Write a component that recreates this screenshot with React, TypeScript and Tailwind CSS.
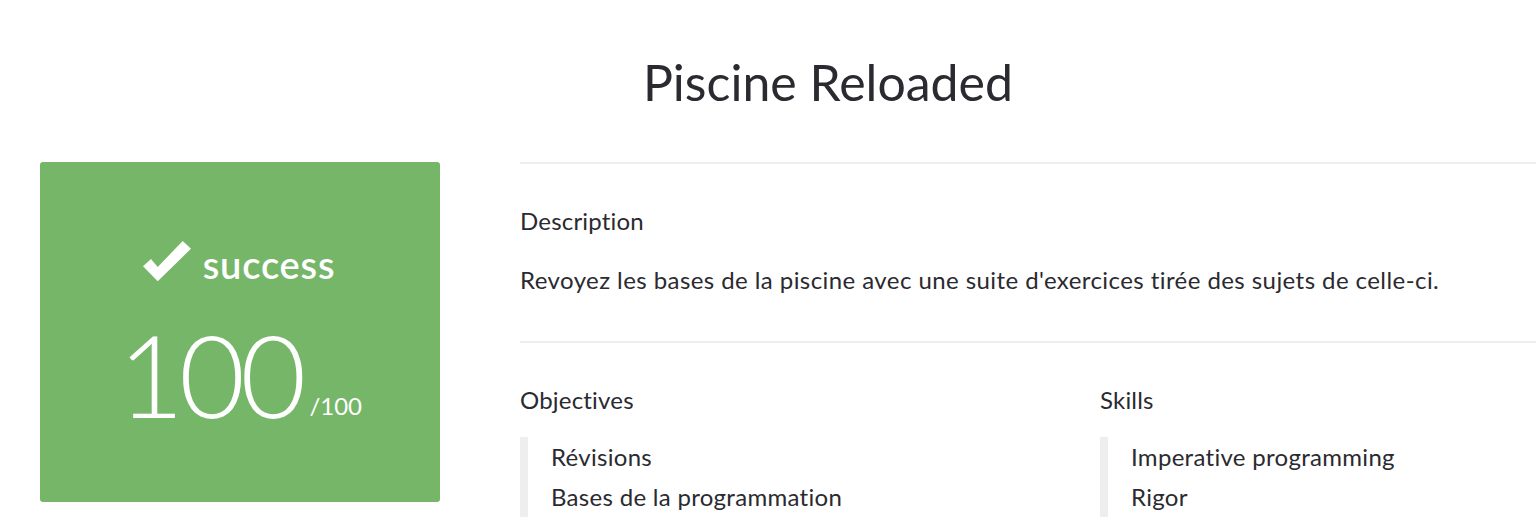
const objectives = ["Révisions", "Bases de la programmation"];
const skills = ["Imperative programming", "Rigor"];

function CheckMark() {
  return (
    <svg viewBox="0 0 48 42" className="h-[42px] w-[48px]" fill="currentColor">
      <polygon points="0,26.3 8,19 14.7,27 39.7,1 48,8.7 14.7,41.3" />
    </svg>
  );
}

function ItemList({ title, items, className }: { title: string; items: string[]; className?: string }) {
  return (
    <div className={className}>
      <h3 className="text-[24px] leading-[30px] tracking-[0.2px]">{title}</h3>
      <ul className="mt-[22px] border-l-[8px] border-[#eeeeee] pl-[23px]">
        {items.map((item) => (
          <li key={item} className="text-[24px] leading-[40px] tracking-[0.3px]">
            {item}
          </li>
        ))}
      </ul>
    </div>
  );
}

export default function App() {
  return (
    <div className="h-[520px] overflow-hidden bg-white font-['Lato',sans-serif] text-[#2a2a30]">
      <div className="pt-[52px] pl-[120px]">
        <h1 className="text-center text-[50px] leading-[60px] font-normal">Piscine Reloaded</h1>
      </div>
      <div className="mt-[50px] flex gap-[80px] pl-[40px]">
        <div className="flex h-[340px] w-[400px] shrink-0 flex-col items-center justify-center rounded-[3px] bg-[#76b669] pb-[6px] text-white">
          <div className="-ml-[2px] flex items-end gap-[12px]">
            <CheckMark />
            <span className="text-[38px] font-semibold leading-[36px] tracking-[0.8px]">success</span>
          </div>
          <div className="mt-[48px] flex items-end">
            <span className="text-[114px] leading-[88px] font-light tracking-[-5px]">100</span>
            <span className="ml-[8px] text-[24px] leading-none">/100</span>
          </div>
        </div>
        <div className="flex-1">
          <div className="border-t-2 border-[#eeeeee] pt-[42px] pb-[46px]">
            <h3 className="text-[24px] leading-[30px] tracking-[0.2px]">Description</h3>
            <p className="mt-[29px] text-[24px] leading-[30px] tracking-[0.43px]">
              Revoyez les bases de la piscine avec une suite d'exercices tirée des sujets de celle-ci.
            </p>
          </div>
          <div className="flex border-t-2 border-[#eeeeee] pt-[42px]">
            <ItemList title="Objectives" items={objectives} className="w-[580px] shrink-0" />
            <ItemList title="Skills" items={skills} className="flex-1" />
          </div>
        </div>
      </div>
    </div>
  );
}
